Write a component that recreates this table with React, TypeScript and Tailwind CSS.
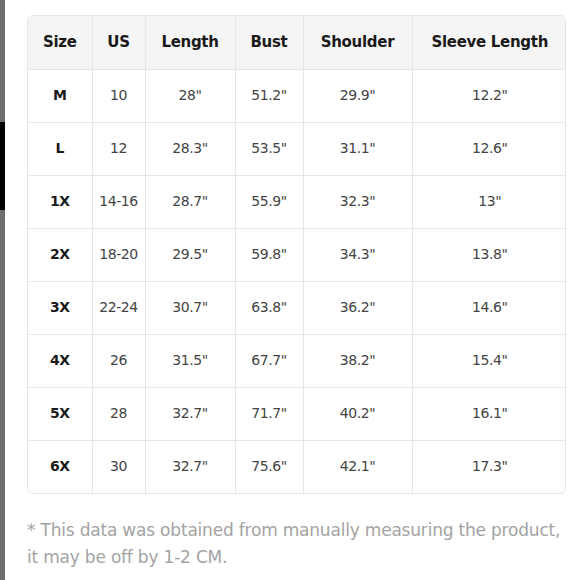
const cols = [
  { label: 'Size', w: 'w-[64px]' },
  { label: 'US', w: 'w-[53px]' },
  { label: 'Length', w: 'w-[90px]' },
  { label: 'Bust', w: 'w-[68px]' },
  { label: 'Shoulder', w: 'w-[109px]' },
  { label: 'Sleeve Length', w: 'w-[155px]' },
];

const rows = [
  ['M', '10', '28"', '51.2"', '29.9"', '12.2"'],
  ['L', '12', '28.3"', '53.5"', '31.1"', '12.6"'],
  ['1X', '14-16', '28.7"', '55.9"', '32.3"', '13"'],
  ['2X', '18-20', '29.5"', '59.8"', '34.3"', '13.8"'],
  ['3X', '22-24', '30.7"', '63.8"', '36.2"', '14.6"'],
  ['4X', '26', '31.5"', '67.7"', '38.2"', '15.4"'],
  ['5X', '28', '32.7"', '71.7"', '40.2"', '16.1"'],
  ['6X', '30', '32.7"', '75.6"', '42.1"', '17.3"'],
];

export default function App() {
  return (
    <div className="w-[580px] h-[580px] bg-white flex overflow-hidden font-['DejaVu_Sans',sans-serif]">
      {/* dimmed page behind the modal */}
      <div className="w-[5px] shrink-0 flex flex-col bg-[#6e6e6e]">
        <div className="h-[122px]" />
        <div className="h-[88px] bg-black" />
      </div>

      <div className="pl-[22px] pt-[15px] flex flex-col">
        <div className="w-[539px] border border-[#e6e6e6] rounded-[6px] overflow-hidden">
          <table className="border-collapse table-fixed w-full">
            <thead>
              <tr className="bg-[#f5f5f5] h-[53px]">
                {cols.map((c, i) => (
                  <th
                    key={c.label}
                    className={`${c.w} text-[15px] font-bold text-[#1a1a1a] tracking-[-0.3px] ${i > 0 ? 'border-l border-[#e6e6e6]' : ''}`}
                  >
                    {c.label}
                  </th>
                ))}
              </tr>
            </thead>
            <tbody>
              {rows.map((r) => (
                <tr key={r[0]} className="h-[53px] border-t border-[#e6e6e6]">
                  {r.map((v, i) => (
                    <td
                      key={i}
                      className={`text-center text-[14px] tracking-[-0.4px] ${
                        i === 0 ? 'font-bold text-[#1a1a1a]' : 'text-[#444]'
                      } ${i > 0 ? 'border-l border-[#e6e6e6]' : ''}`}
                    >
                      {v}
                    </td>
                  ))}
                </tr>
              ))}
            </tbody>
          </table>
        </div>

        <p className="mt-[23px] w-[545px] text-[17px] leading-[27px] text-[#a3a3a3] tracking-[-0.2px]">
          * This data was obtained from manually measuring the product, it may be off by 1-2 CM.
        </p>
      </div>
    </div>
  );
}
